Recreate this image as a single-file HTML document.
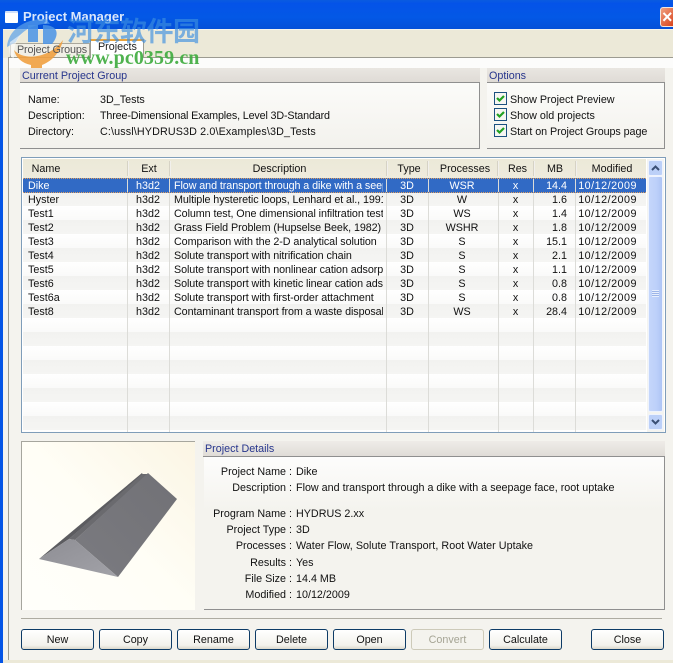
<!DOCTYPE html>
<html><head><meta charset="utf-8">
<style>
html,body{margin:0;padding:0}
body{width:673px;height:663px;overflow:hidden;position:relative;background:#f4f3ee;font-family:"Liberation Sans","Noto Sans CJK SC",sans-serif;font-size:10.75px;color:#111}
.a{position:absolute;white-space:nowrap}
.t{position:absolute;white-space:nowrap;line-height:14px;height:14px;margin-top:1px}
.gh{position:absolute;background:linear-gradient(#e9e6e1,#dfdbd6);border-bottom:1px solid #8f8f8f;color:#27358c;line-height:16px;box-sizing:border-box;padding-left:2px}
.btn{position:absolute;top:629px;width:73px;height:21px;box-sizing:border-box;border:1px solid #0d3b66;border-radius:3px;background:linear-gradient(#fff,#f3f2ec 80%,#dcd8cc);text-align:center;line-height:21px}
.cb{position:absolute;left:494px;width:13px;height:13px;box-sizing:border-box;border:1px solid #1c5180;background:#f6f6f2}
.r{position:absolute;left:23px;width:623px;height:14px}
.c{position:absolute;top:0;line-height:15px;white-space:nowrap;overflow:hidden;height:14px}
.n{left:5px;width:100px}.e{left:104px;width:42px;text-align:center}.d{left:151px;width:209px;letter-spacing:-.08px}.y{left:363px;width:42px;text-align:center}.p{left:404px;width:70px;text-align:center}.s{left:475px;width:35px;text-align:center}.m{left:510px;width:34px;text-align:right}.o{left:552px;width:62px;text-align:right;letter-spacing:.5px}
.h{position:absolute;top:159px;height:19px;line-height:21px;text-align:center;white-space:nowrap}
.v{position:absolute;top:179px;width:1px;height:253px;background:#dcdcd8}
.hs{position:absolute;top:161px;width:2px;height:15px;background:linear-gradient(90deg,#c8c4b2,#fff)}
.lb{position:absolute;left:204px;width:88px;text-align:right;line-height:14px;white-space:nowrap;margin-top:1px}
.vl{position:absolute;left:296px;line-height:14px;white-space:nowrap;margin-top:1px}
</style></head><body>
<!-- title bar -->
<div class="a" style="left:0;top:0;width:673px;height:29px;background:linear-gradient(#0a5be0,#0453e8 12%,#0358e6 60%,#0450d8)"></div>
<div class="a" style="left:5px;top:11px;width:13px;height:10px;background:#fff;border-top:2px solid #cfe0fb;border-radius:1px"></div>
<div class="a" style="left:23px;top:9px;font-size:13px;font-weight:bold;color:#dbe7fb;line-height:16px">Project Manager</div>
<div class="a" style="left:660px;top:7px;width:13px;height:20px;background:linear-gradient(135deg,#f0a080,#d8431c);border:1px solid #f3e4dc;border-right:0;border-radius:3px 0 0 3px;box-sizing:border-box"></div>
<div class="a" style="left:662px;top:7px;color:#fff;font-size:18px;font-weight:bold;line-height:20px">×</div>
<!-- window frame -->
<div class="a" style="left:0;top:29px;width:3px;height:634px;background:#0555e6"></div>
<div class="a" style="left:3px;top:30px;width:670px;height:28px;background:#ece9d8"></div>
<!-- tab page -->
<div class="a" style="left:8px;top:57px;width:665px;height:604px;box-sizing:border-box;border:1px solid #9c9b91;border-right:0;background:#f4f3ee"></div>
<div class="a" style="left:9px;top:58px;width:664px;height:10px;background:#fcfcfb"></div>
<div class="a" style="left:3px;top:660px;width:670px;height:3px;background:#ece9d8"></div>
<!-- tabs -->
<div class="a" style="left:10px;top:43px;width:80px;height:14px;background:#f1efe6;border:1px solid #aaa79b;border-bottom:0;box-sizing:border-box"></div>
<div class="a" style="left:90px;top:39px;width:54px;height:19px;background:#fff;border:1px solid #9c9b91;border-bottom:0;border-top:2px solid #e8a33c;box-sizing:border-box"></div>
<div class="a" style="left:98px;top:40px;color:#222;line-height:14px">Projects</div>
<!-- watermark -->
<svg class="a" style="left:0;top:10px" width="70" height="60" viewBox="0 0 70 60">
<path d="M7 37C8 20 25 8 46 9L50 14C33 13 20 22 16 32Z" fill="#5aa0ea" opacity=".7"/>
<path d="M10 32C8 42 10 48 14 48C13 40 16 28 24 22Z" fill="#fff" opacity=".55"/>
<path d="M28 15H38V32H28Z" fill="#4a93e6" opacity=".85"/>
<path d="M43 15C58 15 60 24 52 34L43 34Z" fill="#4a93e6" opacity=".85"/>
<path d="M14 40C22 50 48 50 63 30C60 44 50 52 42 55V60H31V55C22 53 16 48 14 40Z" fill="#f0a040" opacity=".9"/>
</svg>
<div class="a" style="left:17px;top:43px;color:#555;line-height:14px;letter-spacing:-.12px">Project Groups</div>
<div class="a" style="left:67px;top:14px;font-family:'Noto Sans CJK SC',sans-serif;font-size:27px;font-weight:bold;color:#3d8fe0;opacity:.65;line-height:32px;letter-spacing:-.5px">河东软件园</div>
<div class="a" style="left:66px;top:48px;font-family:'Liberation Serif',serif;font-size:20px;font-weight:bold;color:#3dab3d;line-height:20px;opacity:.9;letter-spacing:.1px">www.pc0359.cn</div>
<!-- group 1 -->
<div class="gh" style="left:20px;top:68px;width:460px;height:15px">Current Project Group</div>
<div class="a" style="left:20px;top:83px;width:460px;height:66px;background:linear-gradient(#fbfbf9,#f3f2ed);border-right:1px solid #8f8f8f;border-bottom:1px solid #8f8f8f;box-sizing:border-box"></div>
<div class="t" style="left:28px;top:92px">Name:</div><div class="t" style="left:100px;top:92px">3D_Tests</div>
<div class="t" style="left:28px;top:108px">Description:</div><div class="t" style="left:100px;top:108px;letter-spacing:-.15px">Three-Dimensional Examples, Level 3D-Standard</div>
<div class="t" style="left:28px;top:124px">Directory:</div><div class="t" style="left:100px;top:124px;letter-spacing:.13px">C:\ussl\HYDRUS3D 2.0\Examples\3D_Tests</div>
<!-- options -->
<div class="gh" style="left:487px;top:68px;width:178px;height:15px">Options</div>
<div class="a" style="left:487px;top:83px;width:178px;height:66px;background:linear-gradient(#fbfbf9,#f3f2ed);border-right:1px solid #8f8f8f;border-bottom:1px solid #8f8f8f;box-sizing:border-box"></div>
<div class="cb" style="top:92px"></div><div class="cb" style="top:108px"></div><div class="cb" style="top:124px"></div>
<svg class="a" style="left:494px;top:92px" width="13" height="45" viewBox="0 0 13 45"><g fill="none" stroke="#21a121" stroke-width="2.200"><path d="M3 6l2.500 2.500L10 4"/><path d="M3 22l2.500 2.500L10 20"/><path d="M3 38l2.500 2.500L10 36"/></g></svg>
<div class="t" style="left:510px;top:92px">Show Project Preview</div>
<div class="t" style="left:510px;top:108px">Show old projects</div>
<div class="t" style="left:510px;top:124px;letter-spacing:-.07px">Start on Project Groups page</div>
<!-- table -->
<div class="a" style="left:21px;top:157px;width:645px;height:276px;box-sizing:border-box;border:1px solid #7f9db9;background:#fff"></div>
<div class="a" style="left:23px;top:159px;width:623px;height:19px;background:linear-gradient(#ece9d8,#eeebdd)"></div>
<div class="a" style="left:23px;top:178px;width:623px;height:254px;background:repeating-linear-gradient(#fff 0,#fafaf9 14px,#f2f2f0 14px,#f5f5f3 28px)"></div>
<div class="hs" style="left:127px"></div><div class="hs" style="left:169px"></div><div class="hs" style="left:386px"></div><div class="hs" style="left:427px"></div><div class="hs" style="left:497px"></div><div class="hs" style="left:533px"></div><div class="hs" style="left:575px"></div>
<div class="v" style="left:127px"></div><div class="v" style="left:169px"></div><div class="v" style="left:386px"></div><div class="v" style="left:428px"></div><div class="v" style="left:498px"></div><div class="v" style="left:533px"></div><div class="v" style="left:575px"></div>
<div class="h" style="left:23px;width:46px">Name</div><div class="h" style="left:129px;width:40px">Ext</div><div class="h" style="left:171px;width:217px">Description</div><div class="h" style="left:389px;width:40px">Type</div><div class="h" style="left:430px;width:70px">Processes</div><div class="h" style="left:500px;width:35px">Res</div><div class="h" style="left:535px;width:40px">MB</div><div class="h" style="left:577px;width:70px">Modified</div>
<div class="a" style="left:23px;top:178px;width:623px;height:15px;background:#316ac5;border-top:1px dotted #e0a060;border-bottom:1px dotted #e0a060;box-sizing:border-box"></div>
<div class="r" style="top:179px;color:#fff"><div class="c n">Dike</div><div class="c e">h3d2</div><div class="c d">Flow and transport through a dike with a seepage</div><div class="c y">3D</div><div class="c p">WSR</div><div class="c s">x</div><div class="c m">14.4</div><div class="c o">10/12/2009</div></div>
<div class="a" style="left:127px;top:179px;width:1px;height:13px;background:#dcdcd8"></div><div class="a" style="left:169px;top:179px;width:1px;height:13px;background:#dcdcd8"></div><div class="a" style="left:386px;top:179px;width:1px;height:13px;background:#dcdcd8"></div><div class="a" style="left:428px;top:179px;width:1px;height:13px;background:#dcdcd8"></div><div class="a" style="left:498px;top:179px;width:1px;height:13px;background:#dcdcd8"></div><div class="a" style="left:533px;top:179px;width:1px;height:13px;background:#dcdcd8"></div><div class="a" style="left:575px;top:179px;width:1px;height:13px;background:#dcdcd8"></div>
<div class="r" style="top:193px"><div class="c n">Hyster</div><div class="c e">h3d2</div><div class="c d">Multiple hysteretic loops, Lenhard et al., 1991</div><div class="c y">3D</div><div class="c p">W</div><div class="c s">x</div><div class="c m">1.6</div><div class="c o">10/12/2009</div></div>
<div class="r" style="top:207px"><div class="c n">Test1</div><div class="c e">h3d2</div><div class="c d">Column test, One dimensional infiltration test</div><div class="c y">3D</div><div class="c p">WS</div><div class="c s">x</div><div class="c m">1.4</div><div class="c o">10/12/2009</div></div>
<div class="r" style="top:221px"><div class="c n">Test2</div><div class="c e">h3d2</div><div class="c d">Grass Field Problem (Hupselse Beek, 1982)</div><div class="c y">3D</div><div class="c p">WSHR</div><div class="c s">x</div><div class="c m">1.8</div><div class="c o">10/12/2009</div></div>
<div class="r" style="top:235px"><div class="c n">Test3</div><div class="c e">h3d2</div><div class="c d">Comparison with the 2-D analytical solution</div><div class="c y">3D</div><div class="c p">S</div><div class="c s">x</div><div class="c m">15.1</div><div class="c o">10/12/2009</div></div>
<div class="r" style="top:249px"><div class="c n">Test4</div><div class="c e">h3d2</div><div class="c d">Solute transport with nitrification chain</div><div class="c y">3D</div><div class="c p">S</div><div class="c s">x</div><div class="c m">2.1</div><div class="c o">10/12/2009</div></div>
<div class="r" style="top:263px"><div class="c n">Test5</div><div class="c e">h3d2</div><div class="c d">Solute transport with nonlinear cation adsorption</div><div class="c y">3D</div><div class="c p">S</div><div class="c s">x</div><div class="c m">1.1</div><div class="c o">10/12/2009</div></div>
<div class="r" style="top:277px"><div class="c n">Test6</div><div class="c e">h3d2</div><div class="c d">Solute transport with kinetic linear cation adsorption</div><div class="c y">3D</div><div class="c p">S</div><div class="c s">x</div><div class="c m">0.8</div><div class="c o">10/12/2009</div></div>
<div class="r" style="top:291px"><div class="c n">Test6a</div><div class="c e">h3d2</div><div class="c d">Solute transport with first-order attachment</div><div class="c y">3D</div><div class="c p">S</div><div class="c s">x</div><div class="c m">0.8</div><div class="c o">10/12/2009</div></div>
<div class="r" style="top:305px"><div class="c n">Test8</div><div class="c e">h3d2</div><div class="c d">Contaminant transport from a waste disposal site</div><div class="c y">3D</div><div class="c p">WS</div><div class="c s">x</div><div class="c m">28.4</div><div class="c o">10/12/2009</div></div>
<!-- scrollbar -->
<div class="a" style="left:647px;top:159px;width:17px;height:273px;background:#f4f4f0"></div>
<div class="a" style="left:648px;top:176px;width:15px;height:236px;background:linear-gradient(90deg,#c5d6fb,#bcd0fa 60%,#aec4f4);border:1px solid #eef3fe;box-sizing:border-box;border-radius:2px"></div>
<div class="a" style="left:652px;top:290px;width:7px;height:7px;background:repeating-linear-gradient(#e8effd 0,#e8effd 1px,#9db5e8 1px,#9db5e8 2px)"></div>
<div class="a" style="left:648px;top:160px;width:15px;height:16px;background:#bcd0f8;border:1px solid #eef3fe;box-sizing:border-box;border-radius:2px"></div>
<div class="a" style="left:648px;top:414px;width:15px;height:16px;background:#bcd0f8;border:1px solid #eef3fe;box-sizing:border-box;border-radius:2px"></div>
<svg class="a" style="left:648px;top:160px" width="15" height="16"><path d="M4 10l3.500-3.500L11 10" fill="none" stroke="#3a4f75" stroke-width="2"/></svg>
<svg class="a" style="left:648px;top:414px" width="15" height="16"><path d="M4 6l3.500 3.500L11 6" fill="none" stroke="#3a4f75" stroke-width="2"/></svg>
<!-- preview -->
<div class="a" style="left:21px;top:441px;width:174px;height:169px;box-sizing:border-box;border-left:1px solid #a6a69e;border-top:1px solid #a6a69e;background:linear-gradient(45deg,#fffffb,#fffef6 50%,#fbf5e4)"></div>
<svg class="a" style="left:21px;top:441px" width="174" height="169" viewBox="0 0 174 169">
<defs>
<linearGradient id="g1" x1="0" y1="1" x2="1" y2="0"><stop offset="0" stop-color="#7b7b80"/><stop offset="1" stop-color="#717176"/></linearGradient>
<linearGradient id="g2" x1="0" y1="0" x2="1" y2="1"><stop offset="0" stop-color="#8e8e94"/><stop offset="1" stop-color="#a2a2a8"/></linearGradient>
</defs>
<path d="M18 118L121 32L122 34L48 98Z" fill="#5c5c60"/>
<path d="M48 98L121 33H127L54 99Z" fill="#6a6a6e"/>
<path d="M54 99L127 32L156 58L97 136Z" fill="url(#g1)"/>
<path d="M18 118L48 98L54 99L97 136Z" fill="url(#g2)"/>
</svg>
<!-- details -->
<div class="gh" style="left:203px;top:441px;width:462px;height:16px;background:linear-gradient(#efecE8,#e0dcd7)">Project Details</div>
<div class="a" style="left:204px;top:457px;width:461px;height:153px;box-sizing:border-box;border-right:1px solid #8f8f8f;border-bottom:1px solid #8f8f8f;background:linear-gradient(#fdfdfc,#f4f3ee 35%)"></div>
<div class="lb" style="top:464px">Project Name :</div><div class="vl" style="top:464px">Dike</div>
<div class="lb" style="top:480px">Description :</div><div class="vl" style="top:480px">Flow and transport through a dike with a seepage face, root uptake</div>
<div class="lb" style="top:506px">Program Name :</div><div class="vl" style="top:506px">HYDRUS 2.xx</div>
<div class="lb" style="top:522px">Project Type :</div><div class="vl" style="top:522px">3D</div>
<div class="lb" style="top:538px">Processes :</div><div class="vl" style="top:538px;letter-spacing:.04px">Water Flow, Solute Transport, Root Water Uptake</div>
<div class="lb" style="top:555px">Results :</div><div class="vl" style="top:555px">Yes</div>
<div class="lb" style="top:571px">File Size :</div><div class="vl" style="top:571px">14.4 MB</div>
<div class="lb" style="top:587px">Modified :</div><div class="vl" style="top:587px">10/12/2009</div>
<div class="a" style="left:21px;top:618px;width:641px;height:1px;background:#aeaca2"></div>
<!-- buttons -->
<div class="btn" style="left:21px">New</div>
<div class="btn" style="left:99px">Copy</div>
<div class="btn" style="left:177px">Rename</div>
<div class="btn" style="left:255px">Delete</div>
<div class="btn" style="left:333px">Open</div>
<div class="btn" style="left:411px;border-color:#cdcab9;background:#f4f3ee;color:#a5a494">Convert</div>
<div class="btn" style="left:489px">Calculate</div>
<div class="btn" style="left:591px">Close</div>
</body></html>
